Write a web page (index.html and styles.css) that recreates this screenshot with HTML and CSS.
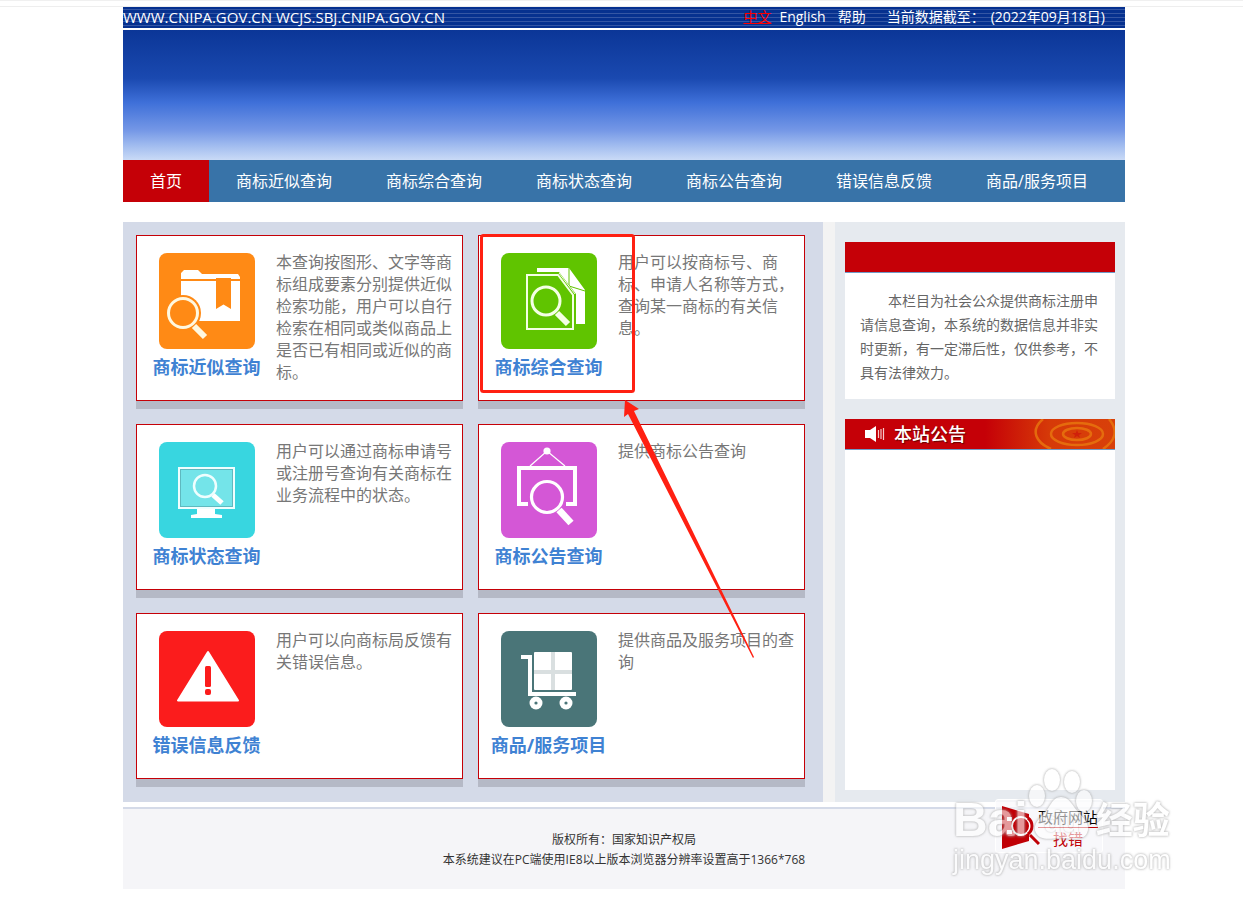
FILE: index.html
```html
<!DOCTYPE html>
<html lang="zh-CN">
<head>
    <meta charset="UTF-8">
    <meta name="viewport" content="width=device-width, initial-scale=1.0">
    <title>商标查询</title>
    <link rel="stylesheet" href="styles.css">
</head>
<body>
    <div class="page">
        <!-- 顶部信息 -->
        <div class="topbar">
            <span class="domain">WWW.CNIPA.GOV.CN WCJS.SBJ.CNIPA.GOV.CN</span>
            <a href="#" class="lang active">中文</a>
            <a href="#" class="lang">English</a>
            <a href="#" class="help">帮助</a>
            <span class="date">当前数据截至：</span>
            <span>(2022年09月18日)</span>
        </div>
        <div class="banner"></div>
        <!-- 导航 -->
        <nav class="nav">
            <a href="#" class="current">首页</a>
            <a href="#">商标近似查询</a>
            <a href="#">商标综合查询</a>
            <a href="#">商标状态查询</a>
            <a href="#">商标公告查询</a>
            <a href="#">错误信息反馈</a>
            <a href="#">商品/服务项目</a>
        </nav>

        <div class="content">
            <main class="services">
                <div class="card">
                    <a href="#" class="entry">
                        <svg class="icon" viewBox="0 0 96 96">
                            <rect width="96" height="96" rx="8" fill="#ff8a15"/>
                            <path d="M22 26v-6l3-3h14l4 4h36l2 3v2z M22 28h59v40H22z" fill="#fff"/>
                            <path d="M57 25h15v31l-7.500-4.500-7.500 4.500z" fill="#ff8a15"/>
                            <circle cx="24" cy="60" r="18" fill="#ff8a15"/>
                            <circle cx="24" cy="60" r="14.500" fill="none" stroke="#fff8e0" stroke-width="3"/>
                            <path d="M35 73l11 11" stroke="#fff8e0" stroke-width="6"/>
                        </svg>
                        <span>商标近似查询</span>
                    </a>
                    <p>本查询按图形、文字等商标组成要素分别提供近似检索功能，用户可以自行检索在相同或类似商品上是否已有相同或近似的商标。</p>
                </div>
                <div class="card">
                    <a href="#" class="entry">
                        <svg class="icon" viewBox="0 0 96 96">
                            <rect width="96" height="96" rx="8" fill="#60c400"/>
                            <path d="M36 15h32l16 22v34H60V30L36 20z" fill="#fff"/>
                            <path d="M68 15v18l16 5" fill="none" stroke="#60c400"/>
                            <path d="M23 19h35l17 22v38H23z" fill="#60c400"/>
                            <path d="M26 22h31l15 20v34H26z" fill="#60c400" stroke="#f4ffe4" stroke-width="2"/>
                            <path d="M58 20l16 21" stroke="#f4ffe4"/>
                            <circle cx="45" cy="48" r="14" fill="none" stroke="#f4ffe4" stroke-width="3"/>
                            <path d="M56 60l11 11" stroke="#f4ffe4" stroke-width="6"/>
                        </svg>
                        <span>商标综合查询</span>
                    </a>
                    <p>用户可以按商标号、商标、申请人名称等方式，查询某一商标的有关信息。</p>
                </div>
                <div class="card">
                    <a href="#" class="entry">
                        <svg class="icon" viewBox="0 0 96 96">
                            <rect width="96" height="96" rx="8" fill="#38d6e0"/>
                            <rect x="20" y="26" width="55" height="40" fill="#74e4e9" stroke="#effefe" stroke-width="2"/>
                            <rect x="21.500" y="27.500" width="52" height="37" fill="none" stroke="#5fb9bf"/>
                            <path d="M38 67h18v5l7 1v3H32v-3l6-1z" fill="#fff"/>
                            <circle cx="46" cy="44" r="11" fill="none" stroke="#effefe" stroke-width="2.500"/>
                            <path d="M54 53l9 8" stroke="#fff" stroke-width="5"/>
                        </svg>
                        <span>商标状态查询</span>
                    </a>
                    <p>用户可以通过商标申请号或注册号查询有关商标在业务流程中的状态。</p>
                </div>
                <div class="card">
                    <a href="#" class="entry">
                        <svg class="icon" viewBox="0 0 96 96">
                            <rect width="96" height="96" rx="8" fill="#d457d6"/>
                            <path d="M29 24L46 9l18 15" fill="none" stroke="#fff" stroke-width="1.300"/>
                            <circle cx="46" cy="9" r="3.600" fill="#fff"/>
                            <path d="M27 62h-9V26h56v36h-9" fill="none" stroke="#fff" stroke-width="4"/>
                            <circle cx="46" cy="55" r="15.500" fill="none" stroke="#fff" stroke-width="3.200"/>
                            <path d="M58 68l12 13" stroke="#fff" stroke-width="7"/>
                        </svg>
                        <span>商标公告查询</span>
                    </a>
                    <p>提供商标公告查询</p>
                </div>
                <div class="card">
                    <a href="#" class="entry">
                        <svg class="icon" viewBox="0 0 96 96">
                            <rect width="96" height="96" rx="8" fill="#fb1c1c"/>
                            <path d="M49 21L19 69.500h60z" fill="#fff" stroke="#fff" stroke-width="2" stroke-linejoin="round"/>
                            <rect x="46" y="35" width="6" height="21" rx="1.500" fill="#fb1c1c"/>
                            <rect x="46" y="58" width="6" height="6" rx="2" fill="#fb1c1c"/>
                        </svg>
                        <span>错误信息反馈</span>
                    </a>
                    <p>用户可以向商标局反馈有关错误信息。</p>
                </div>
                <div class="card">
                    <a href="#" class="entry">
                        <svg class="icon" viewBox="0 0 96 96">
                            <rect width="96" height="96" rx="8" fill="#4a7578"/>
                            <rect x="33" y="21" width="38" height="38" rx="1" fill="#fff"/>
                            <path d="M52 21v38M33 41h38" stroke="#d9dfe0" stroke-width="4"/>
                            <path d="M20 26h9v37h46" fill="none" stroke="#fff" stroke-width="4"/>
                            <circle cx="35" cy="72" r="6.500" fill="#fff"/>
                            <circle cx="65" cy="72" r="6.500" fill="#fff"/>
                            <circle cx="35" cy="72" r="1.600" fill="#4a7578"/>
                            <circle cx="65" cy="72" r="1.600" fill="#4a7578"/>
                        </svg>
                        <span>商品/服务项目</span>
                    </a>
                    <p>提供商品及服务项目的查询</p>
                </div>

                <!-- 红框和箭头 -->
                <svg class="mark" viewBox="480 234 275 426">
                    <rect x="481.500" y="235.500" width="152" height="156" rx="2" fill="none" stroke="#ff2012" stroke-width="3"/>
                    <path d="M625 400l14 9-5 2 120 246-1 1L628 414l-4 3z" fill="#ff2012"/>
                </svg>
            </main>

            <aside class="sidebar">
                <section class="panel">
                    <div class="panel-head"></div>
                    <p class="notice">本栏目为社会公众提供商标注册申请信息查询，本系统的数据信息并非实时更新，有一定滞后性，仅供参考，不具有法律效力。</p>
                </section>
                <section class="panel news">
                    <h2 class="panel-head">
                        <svg class="flame" viewBox="0 0 130 30" preserveAspectRatio="none">
                            <defs>
                                <linearGradient id="flame">
                                    <stop offset="0" stop-color="#c50007"/>
                                    <stop offset="0.5" stop-color="#d63a08"/>
                                    <stop offset="1" stop-color="#d8400a"/>
                                </linearGradient>
                            </defs>
                            <rect width="130" height="30" fill="url(#flame)"/>
                            <g fill="none" stroke="#e8780f" stroke-width="2.500" stroke-opacity="0.8">
                                <ellipse cx="92" cy="15" rx="14" ry="6"/>
                                <ellipse cx="92" cy="15" rx="26" ry="11"/>
                                <path d="M58 0c-14 12-6 24 8 30M124 0c10 12 6 22-6 30"/>
                            </g>
                            <path d="M92 11l1.200 3h3.800l-3 2 1 3-3-2-3 2 1-3-3-2h3.800z" fill="#d0200a"/>
                        </svg>
                        <svg class="speaker" viewBox="0 0 20 16">
                            <path d="M0 4h5l6-4v16l-6-4H0z" fill="#fff"/>
                            <path d="M13.500 4v8M16 3v10M18.500 2v12" stroke="#f6c9cb" stroke-width="1.200"/>
                        </svg>
                        <span>本站公告</span>
                    </h2>
                </section>
            </aside>
        </div>

        <footer class="footer">
            <p>版权所有：国家知识产权局</p>
            <p>本系统建议在PC端使用IE8以上版本浏览器分辨率设置高于1366*768</p>
            <a href="#" class="report">
                <svg viewBox="0 0 38 44">
                    <path d="M0 0l27 8v27L0 43z" fill="#c00006"/>
                    <path d="M5 13h5M5 26h5" stroke="#f5f5f8" stroke-width="4"/>
                    <circle cx="19" cy="20" r="9" fill="#c00006" stroke="#fff" stroke-width="2"/>
                    <path d="M26 12a10 10 0 0 1 0 16M28 29l9 9" fill="none" stroke="#c00006" stroke-width="3"/>
                </svg>
                <span class="report-text">
                    <span>政府网站</span>
                    <em>找错</em>
                </span>
            </a>
            <!-- 水印 -->
            <div class="watermark">
                <div class="wm-logo">
                    <span class="wm-bai">Bai</span>
                    <span class="wm-paw">
                        <svg viewBox="0 0 68 74">
                            <ellipse cx="24" cy="12" rx="8" ry="11"/>
                            <ellipse cx="44" cy="14" rx="8" ry="11"/>
                            <ellipse cx="9" cy="28" rx="8" ry="11"/>
                            <ellipse cx="56" cy="33" rx="8" ry="11"/>
                            <path d="M33 29c9 0 11 9 18 16 8 8 11 14 8 20-3 7-12 6-26 5-14 1-21 2-25-5-3-6 0-12 7-18 7-7 9-18 18-18z"/>
                        </svg>
                        <span class="wm-du">du</span>
                    </span>
                    <span class="wm-cn">经验</span>
                </div>
                <div class="wm-url">jingyan.baidu.com</div>
            </div>
        </footer>
    </div>
</body>
</html>
```
FILE: styles.css
```css
* {
    box-sizing: border-box;
}
body {
    margin: 0;
    padding: 6px 0 0 5px;
    font-family: "Open Sans", "Noto Sans CJK SC", sans-serif;
    background: linear-gradient(#f0f0f0 1px, #fff 1px, #fff 6px, #eee 6px, #eee 7px, #fff 7px) no-repeat;
}
p, h2 {
    margin: 0;
}
a {
    color: inherit;
    text-decoration: none;
}
.page {
    max-width: 1002px;
    margin: 1px auto 0;
}

/* 顶部 */
.topbar {
    display: flex;
    align-items: flex-start;
    height: 21px;
    padding-right: 20px;
    color: #fff;
    font-size: 14px;
    line-height: 20px;
    white-space: nowrap;
    background: repeating-linear-gradient(#06318f 0, #06318f 2px, #3456a4 2px, #3456a4 3px, #06318f 3px, #06318f 4px);
}
.domain {
    margin-right: auto;
    font-size: 15px;
}
.lang {
    margin-right: 8px;
}
.active {
    color: #f00;
    text-decoration: underline;
}
.help {
    margin: 0 21px 0 4px;
}
.date {
    margin-right: 6px;
}
.banner {
    height: 130px;
    margin-top: 2px;
    background: linear-gradient(#0b3697 0%, #1a49b0 37%, #3f70d9 56%, #7497e6 77%, #a5bff0 90%, #c9daf6 100%);
}
.nav {
    display: flex;
    height: 42px;
    color: #fff;
    font-size: 16px;
    line-height: 42px;
    white-space: nowrap;
    background: #3873a8;
}
.nav a {
    padding: 0 27px;
}
.nav .current {
    background: #c50007;
}

/* 主体 */
.content {
    display: flex;
    gap: 12px;
    margin-top: 20px;
    background: #f3f3f3;
}
.services {
    position: relative;
    flex: 1;
    display: grid;
    grid-template-columns: 1fr 1fr;
    gap: 23px 15px;
    padding: 13px 18px 23px 13px;
    background: #d4dae8;
}
.card {
    display: flex;
    min-height: 166px;
    border: 1px solid #c50007;
    background: #fff;
    box-shadow: 0 8px #b5b9c6;
}
.entry {
    flex: none;
    width: 139px;
    padding-top: 17px;
    text-align: center;
    color: #3f82d3;
    font-size: 18px;
    font-weight: bold;
    line-height: 24px;
}
.icon {
    display: block;
    width: 96px;
    height: 96px;
    margin: 0 auto 6px;
}
.card p {
    padding: 15px 6px 0 0;
    color: #777;
    font-size: 16px;
    line-height: 22px;
}
.mark {
    position: absolute;
    left: 357px;
    top: 12px;
    width: 275px;
    height: 426px;
    pointer-events: none;
}

/* 右侧 */
.sidebar {
    display: flex;
    flex-direction: column;
    gap: 20px;
    width: 290px;
    padding: 20px 10px 12px;
    background: #e6eaef;
}
.panel {
    background: #fff;
}
.news {
    flex: 1;
}
.panel-head {
    position: relative;
    display: flex;
    align-items: center;
    height: 31px;
    padding-left: 20px;
    border-bottom: 1px solid #6f9bc8;
    color: #fff;
    font-size: 18px;
    font-weight: 500;
    line-height: 28px;
    background: #c50007;
}
.flame {
    position: absolute;
    right: 0;
    top: 0;
    width: 130px;
    height: 30px;
}
.speaker {
    width: 20px;
    height: 16px;
    margin-right: 9px;
}
.panel-head span {
    text-shadow: 1px 1px 1px #600;
}
.notice {
    padding: 16px 15px 14px;
    color: #666;
    font-size: 14px;
    line-height: 24px;
    text-indent: 28px;
}

/* 页脚 */
.footer {
    position: relative;
    margin-top: 5px;
    padding: 21px 0 19px;
    border-top: 2px solid #d4dae8;
    text-align: center;
    color: #333;
    font-size: 12px;
    line-height: 20px;
    background: #f5f5f8;
}
.report {
    position: absolute;
    right: 22px;
    top: -10px;
    display: flex;
    width: 108px;
    height: 54px;
    padding: 6px 0 0 6px;
    border: 1px solid #fff;
    border-radius: 3px;
    background: rgba(250, 250, 252, 0.7);
}
.report svg {
    width: 38px;
    height: 44px;
    flex: none;
}
.report-text {
    margin-left: -2px;
    color: #000;
    font-size: 15px;
    line-height: 22px;
}
.report-text span {
    display: block;
    height: 19px;
    margin-top: 3px;
    line-height: 16px;
    border-bottom: 1px solid #c00006;
}
.report-text em {
    color: #c00006;
    font-style: normal;
}

/* 水印 */
.watermark {
    position: absolute;
    right: -54px;
    top: -41px;
    width: 226px;
    color: #fff;
    font-family: "Liberation Sans", "Noto Sans CJK SC", sans-serif;
    text-align: left;
    white-space: nowrap;
    filter: drop-shadow(0 0 1px #999) drop-shadow(0 0 1px #bbb);
    opacity: 0.6;
    pointer-events: none;
}
.wm-logo {
    display: flex;
    align-items: flex-end;
    height: 74px;
    font-size: 48px;
    font-weight: bold;
    line-height: 44px;
}
.wm-paw {
    position: relative;
    width: 68px;
    height: 74px;
}
.wm-paw svg {
    display: block;
    fill: #fff;
}
.wm-du {
    position: absolute;
    left: 0;
    right: 0;
    bottom: 0;
    font-size: 30px;
    line-height: 40px;
    text-align: center;
    text-shadow: 0 0 2px #aaa;
}
.wm-cn {
    font-size: 37px;
    line-height: 40px;
}
.wm-url {
    font-size: 27px;
    line-height: 36px;
}
```
